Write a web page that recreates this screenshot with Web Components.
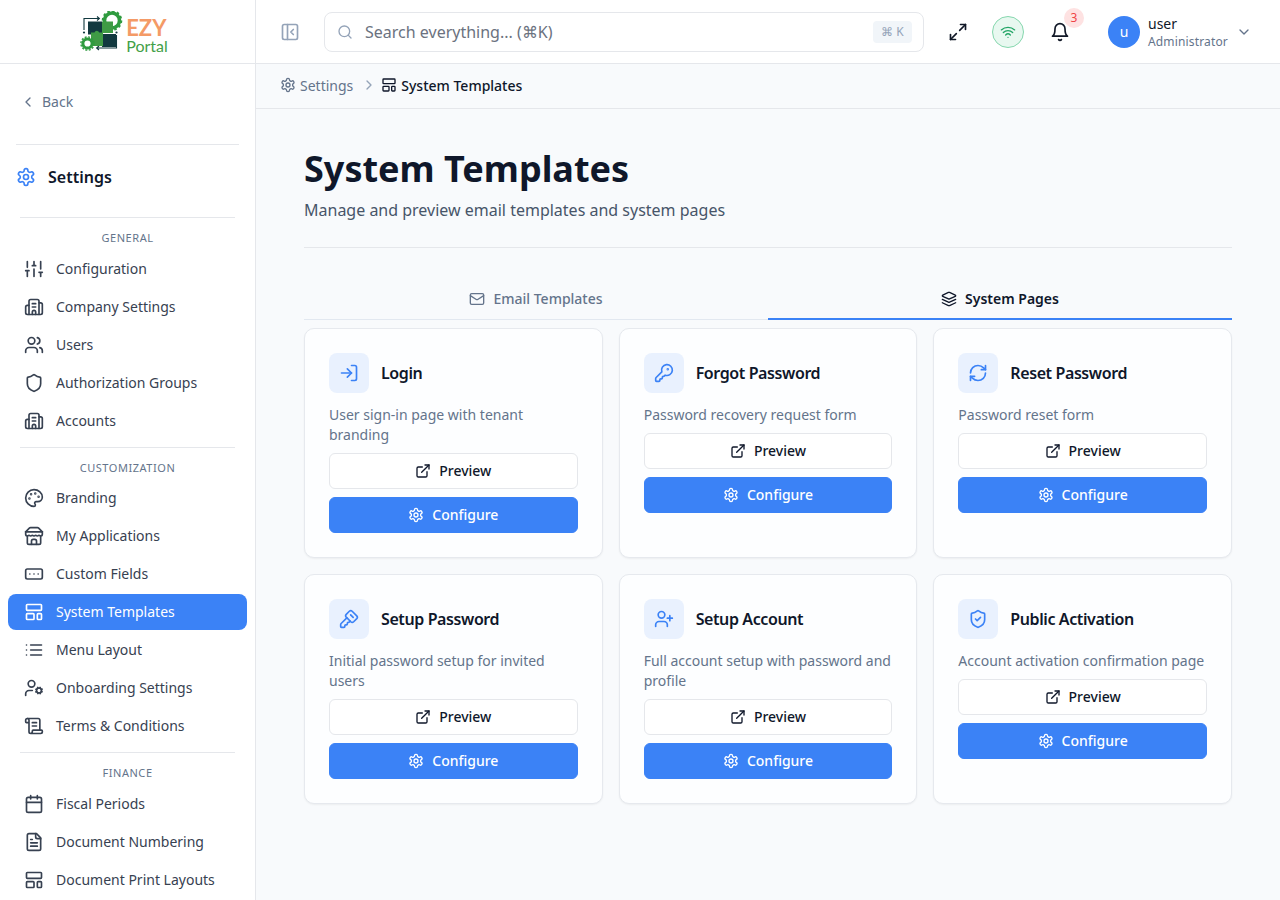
<!DOCTYPE html>
<html lang="en">
<head>
<meta charset="utf-8">
<title>System Templates</title>
<style>
  html, body { margin: 0; height: 100%; overflow: hidden; }
  body { font-family: "Noto Sans", sans-serif; color: #0f172a; }
</style>
</head>
<body>
<ez-app>
  <ez-sidebar slot="sidebar">
    <ez-nav-section label="General" label-height="33">
      <ez-nav-item icon="sliders">Configuration</ez-nav-item>
      <ez-nav-item icon="building">Company Settings</ez-nav-item>
      <ez-nav-item icon="users">Users</ez-nav-item>
      <ez-nav-item icon="shield">Authorization Groups</ez-nav-item>
      <ez-nav-item icon="building">Accounts</ez-nav-item>
    </ez-nav-section>
    <ez-nav-section label="Customization" label-height="32">
      <ez-nav-item icon="palette">Branding</ez-nav-item>
      <ez-nav-item icon="store">My Applications</ez-nav-item>
      <ez-nav-item icon="ellipsis">Custom Fields</ez-nav-item>
      <ez-nav-item icon="template" active>System Templates</ez-nav-item>
      <ez-nav-item icon="list">Menu Layout</ez-nav-item>
      <ez-nav-item icon="user-cog">Onboarding Settings</ez-nav-item>
      <ez-nav-item icon="scroll">Terms &amp; Conditions</ez-nav-item>
    </ez-nav-section>
    <ez-nav-section label="Finance" label-height="33" last>
      <ez-nav-item icon="calendar">Fiscal Periods</ez-nav-item>
      <ez-nav-item icon="file">Document Numbering</ez-nav-item>
      <ez-nav-item icon="template">Document Print Layouts</ez-nav-item>
    </ez-nav-section>
  </ez-sidebar>
  <ez-topbar slot="topbar"></ez-topbar>
  <ez-breadcrumb slot="crumbs"></ez-breadcrumb>
  <ez-page-head heading="System Templates">Manage and preview email templates and system pages</ez-page-head>
  <ez-tabs></ez-tabs>
  <ez-card-grid>
    <ez-template-card icon="log-in" heading="Login">User sign-in page with tenant branding</ez-template-card>
    <ez-template-card icon="key-round" heading="Forgot Password">Password recovery request form</ez-template-card>
    <ez-template-card icon="refresh" heading="Reset Password">Password reset form</ez-template-card>
    <ez-template-card icon="key-square" heading="Setup Password">Initial password setup for invited users</ez-template-card>
    <ez-template-card icon="user-plus" heading="Setup Account">Full account setup with password and profile</ez-template-card>
    <ez-template-card icon="shield-check" heading="Public Activation">Account activation confirmation page</ez-template-card>
  </ez-card-grid>
</ez-app>

<script>
  // lucide style icon bodies, 24x24 viewbox
  const GEAR = '<path d="M12.22 2h-.44a2 2 0 0 0-2 2v.18a2 2 0 0 1-1 1.73l-.43.25a2 2 0 0 1-2 0l-.15-.08a2 2 0 0 0-2.73.73l-.22.38a2 2 0 0 0 .73 2.73l.15.1a2 2 0 0 1 1 1.72v.51a2 2 0 0 1-1 1.74l-.15.09a2 2 0 0 0-.73 2.73l.22.38a2 2 0 0 0 2.73.73l.15-.08a2 2 0 0 1 2 0l.43.25a2 2 0 0 1 1 1.73V20a2 2 0 0 0 2 2h.44a2 2 0 0 0 2-2v-.18a2 2 0 0 1 1-1.73l.43-.25a2 2 0 0 1 2 0l.15.08a2 2 0 0 0 2.73-.73l.22-.39a2 2 0 0 0-.73-2.73l-.15-.08a2 2 0 0 1-1-1.74v-.5a2 2 0 0 1 1-1.74l.15-.09a2 2 0 0 0 .73-2.73l-.22-.38a2 2 0 0 0-2.73-.73l-.15.08a2 2 0 0 1-2 0l-.43-.25a2 2 0 0 1-1-1.73V4a2 2 0 0 0-2-2z"/><circle cx="12" cy="12" r="3"/>';
  const ICONS = {
    gear: GEAR,
    sliders: '<path d="M4 21v-7M4 10V3M12 21v-9M12 8V3M20 21v-5M20 12V3M2 14h4M10 8h4M18 16h4"/>',
    building: '<path d="M10 12h4"/><path d="M10 8h4"/><path d="M14 21v-3a2 2 0 0 0-4 0v3"/><path d="M6 10H4a2 2 0 0 0-2 2v7a2 2 0 0 0 2 2h16a2 2 0 0 0 2-2V9a2 2 0 0 0-2-2h-2"/><path d="M6 21V5a2 2 0 0 1 2-2h8a2 2 0 0 1 2 2v16"/>',
    users: '<path d="M16 21v-2a4 4 0 0 0-4-4H6a4 4 0 0 0-4 4v2"/><circle cx="9" cy="7" r="4"/><path d="M22 21v-2a4 4 0 0 0-3-3.87"/><path d="M16 3.13a4 4 0 0 1 0 7.75"/>',
    shield: '<path d="M20 13c0 5-3.5 7.5-7.66 8.95a1 1 0 0 1-.67-.01C7.5 20.5 4 18 4 13V6a1 1 0 0 1 1-1c2 0 4.5-1.2 6.24-2.72a1.17 1.17 0 0 1 1.52 0C14.51 3.81 17 5 19 5a1 1 0 0 1 1 1z"/>',
    'shield-check': '<path d="M20 13c0 5-3.5 7.5-7.66 8.95a1 1 0 0 1-.67-.01C7.5 20.5 4 18 4 13V6a1 1 0 0 1 1-1c2 0 4.5-1.2 6.24-2.72a1.17 1.17 0 0 1 1.52 0C14.51 3.81 17 5 19 5a1 1 0 0 1 1 1z"/><path d="m9 12 2 2 4-4"/>',
    palette: '<circle cx="13.5" cy="6.5" r=".5" fill="currentColor"/><circle cx="17.5" cy="10.5" r=".5" fill="currentColor"/><circle cx="8.5" cy="7.5" r=".5" fill="currentColor"/><circle cx="6.5" cy="12.5" r=".5" fill="currentColor"/><path d="M12 2C6.5 2 2 6.5 2 12s4.5 10 10 10c.926 0 1.648-.746 1.648-1.688 0-.437-.18-.835-.437-1.125-.29-.289-.438-.652-.438-1.125a1.64 1.64 0 0 1 1.668-1.668h1.996c3.051 0 5.555-2.503 5.555-5.554C21.965 6.012 17.461 2 12 2z"/>',
    store: '<path d="m2 7 4.41-4.41A2 2 0 0 1 7.83 2h8.34a2 2 0 0 1 1.42.59L22 7"/><path d="M4 12v8a2 2 0 0 0 2 2h12a2 2 0 0 0 2-2v-8"/><path d="M15 22v-4a2 2 0 0 0-2-2h-2a2 2 0 0 0-2 2v4"/><path d="M2 7h20"/><path d="M22 7v3a2 2 0 0 1-2 2a2.7 2.7 0 0 1-1.59-.63.7.7 0 0 0-.82 0A2.7 2.7 0 0 1 16 12a2.7 2.7 0 0 1-1.59-.63.7.7 0 0 0-.82 0A2.7 2.7 0 0 1 12 12a2.7 2.7 0 0 1-1.59-.63.7.7 0 0 0-.82 0A2.7 2.7 0 0 1 8 12a2.7 2.7 0 0 1-1.59-.63.7.7 0 0 0-.82 0A2.7 2.7 0 0 1 4 12a2 2 0 0 1-2-2V7"/>',
    ellipsis: '<rect width="20" height="12" x="2" y="6" rx="2"/><path d="M12 12h.01M17 12h.01M7 12h.01"/>',
    template: '<rect width="18" height="7" x="3" y="3" rx="1"/><rect width="9" height="7" x="3" y="14" rx="1"/><rect width="5" height="7" x="16" y="14" rx="1"/>',
    list: '<path d="M3 12h.01M3 18h.01M3 6h.01M8 12h13M8 18h13M8 6h13"/>',
    'user-cog': '<circle cx="18" cy="15" r="3"/><circle cx="9" cy="7" r="4"/><path d="M10 15H6a4 4 0 0 0-4 4v2"/><path d="m21.7 16.4-.9-.3M15.2 13.9l-.9-.3M16.6 18.7l.3-.9M19.1 12.2l.3-.9M19.6 18.7l-.4-1M16.8 12.3l-.4-1M14.3 16.6l1-.4M20.7 13.8l1-.4"/>',
    scroll: '<path d="M15 12h-5M15 8h-5"/><path d="M19 17V5a2 2 0 0 0-2-2H4"/><path d="M8 21h12a2 2 0 0 0 2-2v-1a1 1 0 0 0-1-1H11a1 1 0 0 0-1 1v1a2 2 0 1 1-4 0V5a2 2 0 1 0-4 0v2a1 1 0 0 0 1 1h3"/>',
    calendar: '<path d="M8 2v4M16 2v4"/><rect width="18" height="18" x="3" y="4" rx="2"/><path d="M3 10h18"/>',
    file: '<path d="M15 2H6a2 2 0 0 0-2 2v16a2 2 0 0 0 2 2h12a2 2 0 0 0 2-2V7Z"/><path d="M14 2v4a2 2 0 0 0 2 2h4"/><path d="M10 9H8M16 13H8M16 17H8"/>',
    panel: '<rect width="18" height="18" x="3" y="3" rx="2"/><path d="M9 3v18"/><path d="m16 15-3-3 3-3"/>',
    search: '<circle cx="11" cy="11" r="8"/><path d="m21 21-4.3-4.3"/>',
    expand: '<path d="M15 3h6v6"/><path d="m21 3-7 7"/><path d="m3 21 7-7"/><path d="M9 21H3v-6"/>',
    wifi: '<path d="M12 20h.01"/><path d="M2 8.82a15 15 0 0 1 20 0"/><path d="M5 12.859a10 10 0 0 1 14 0"/><path d="M8.5 16.429a5 5 0 0 1 7 0"/>',
    bell: '<path d="M6 8a6 6 0 0 1 12 0c0 7 3 9 3 9H3s3-2 3-9"/><path d="M10.3 21a1.94 1.94 0 0 0 3.4 0"/>',
    'chevron-down': '<path d="m6 9 6 6 6-6"/>',
    'chevron-left': '<path d="m15 18-6-6 6-6"/>',
    'chevron-right': '<path d="m9 18 6-6-6-6"/>',
    mail: '<rect width="20" height="16" x="2" y="4" rx="2"/><path d="m22 7-8.97 5.7a1.94 1.94 0 0 1-2.06 0L2 7"/>',
    layers: '<path d="M12.83 2.18a2 2 0 0 0-1.66 0L2.6 6.08a1 1 0 0 0 0 1.83l8.58 3.91a2 2 0 0 0 1.66 0l8.58-3.9a1 1 0 0 0 0-1.83Z"/><path d="m22 17.65-9.17 4.16a2 2 0 0 1-1.66 0L2 17.65"/><path d="m22 12.65-9.17 4.16a2 2 0 0 1-1.66 0L2 12.65"/>',
    'log-in': '<path d="M15 3h4a2 2 0 0 1 2 2v14a2 2 0 0 1-2 2h-4"/><path d="m10 17 5-5-5-5"/><path d="M15 12H3"/>',
    'key-round': '<path d="M2.586 17.414A2 2 0 0 0 2 18.828V21a1 1 0 0 0 1 1h3a1 1 0 0 0 1-1v-1a1 1 0 0 1 1-1h1a1 1 0 0 0 1-1v-1a1 1 0 0 1 1-1h.172a2 2 0 0 0 1.414-.586l.814-.814a6.5 6.5 0 1 0-4-4z"/><circle cx="16.5" cy="7.5" r=".5" fill="currentColor"/>',
    'key-square': '<path d="M12.4 2.7a2.5 2.5 0 0 1 3.4 0l5.5 5.5a2.5 2.5 0 0 1 0 3.4l-3.7 3.7a2.5 2.5 0 0 1-3.4 0L8.7 9.8a2.5 2.5 0 0 1 0-3.4z"/><path d="m14 7 3 3"/><path d="m9.4 10.6-6.814 6.814A2 2 0 0 0 2 18.828V21a1 1 0 0 0 1 1h3a1 1 0 0 0 1-1v-1a1 1 0 0 1 1-1h1a1 1 0 0 0 1-1v-1a1 1 0 0 1 1-1h.172a2 2 0 0 0 1.414-.586l.814-.814"/>',
    refresh: '<path d="M3 12a9 9 0 0 1 9-9 9.75 9.75 0 0 1 6.74 2.74L21 8"/><path d="M21 3v5h-5"/><path d="M21 12a9 9 0 0 1-9 9 9.75 9.75 0 0 1-6.74-2.74L3 16"/><path d="M8 16H3v5"/>',
    external: '<path d="M15 3h6v6"/><path d="M10 14 21 3"/><path d="M18 13v6a2 2 0 0 1-2 2H5a2 2 0 0 1-2-2V8a2 2 0 0 1 2-2h6"/>',
    'user-plus': '<path d="M16 21v-2a4 4 0 0 0-4-4H6a4 4 0 0 0-4 4v2"/><circle cx="9" cy="7" r="4"/><path d="M19 8v6M22 11h-6"/>'
  };

  // small helper, every element here just has a fixed shadow template
  class Base extends HTMLElement {
    connectedCallback() {
      if (this.shadowRoot) return;
      this.attachShadow({ mode: 'open' });
      this.shadowRoot.innerHTML = this.render();
    }
  }

  class EzIcon extends Base {
    render() {
      const size = this.getAttribute('size') || 20;
      return `<style>
        :host { display: inline-flex; flex: none; width: ${size}px; height: ${size}px; }
        svg { display: block; }
      </style>
      <svg width="${size}" height="${size}" viewBox="0 0 24 24" fill="none" stroke="currentColor" stroke-width="2" stroke-linecap="round" stroke-linejoin="round">${ICONS[this.getAttribute('name')] || ''}</svg>`;
    }
  }
  customElements.define('ez-icon', EzIcon);

  class EzLogo extends Base {
    render() {
      return `<style>
        :host { display: flex; align-items: center; height: 40px; }
        svg { display: block; flex: none; }
        .word { display: flex; flex-direction: column; margin-top: 8px; font-family: Lato, sans-serif; }
        .ezy { color: #f49a66; font-size: 22px; font-weight: 700; line-height: 20px; }
        .portal { color: #43a047; font-size: 16px; line-height: 15px; }
      </style>
      <svg width="46" height="42" viewBox="0 0 46 42">
        <g fill="none" stroke="#12393f" stroke-width="1.1">
          <path d="M4 19V7.500h15M17 5.500l2.400 2-2.400 2"/>
          <path d="M36.500 24v13H17M19 35l-2.400 2 2.400 2"/>
        </g>
        <rect x="8" y="10.500" width="14" height="13" fill="#12393f"/>
        <rect x="22" y="23" width="14" height="13" fill="#12393f"/>
        <path d="M11 21.500h3.500a2.400 2.400 0 0 1 4.600 0H23V35H11z" fill="#3f9b45"/>
        <circle cx="32" cy="9.500" r="7.500" fill="none" stroke="#2f9b3f" stroke-width="3.600"/>
        <circle cx="32" cy="9.500" r="9.400" fill="none" stroke="#2f9b3f" stroke-width="1.800" stroke-dasharray="2.600 2.300"/>
        <path d="M22 10.500h11V22H22z" fill="#3f9b45"/>
        <circle cx="7.500" cy="32.500" r="4.600" fill="#fff" stroke="#2f9b3f" stroke-width="3"/>
        <circle cx="7.500" cy="32.500" r="6.600" fill="none" stroke="#2f9b3f" stroke-width="1.400" stroke-dasharray="2 1.500"/>
        <circle cx="4" cy="21.500" r="1.100" fill="#12393f"/>
        <circle cx="36.500" cy="21.500" r="1.100" fill="#12393f"/>
      </svg>
      <div class="word"><span class="ezy">EZY</span><span class="portal">Portal</span></div>`;
    }
  }
  customElements.define('ez-logo', EzLogo);

  class EzNavItem extends Base {
    render() {
      const active = this.hasAttribute('active');
      return `<style>
        :host { display: block; }
        a {
          display: flex; align-items: center; gap: 12px; height: 36px; padding: 0 16px;
          border-radius: 8px; font-size: 14px; line-height: 20px; cursor: pointer;
          color: ${active ? '#fff' : '#374151'}; background: ${active ? '#3b82f6' : 'transparent'};
        }
      </style>
      <a><ez-icon name="${this.getAttribute('icon')}"></ez-icon><slot></slot></a>`;
    }
  }
  customElements.define('ez-nav-item', EzNavItem);

  class EzNavSection extends Base {
    render() {
      return `<style>
        :host { display: block; }
        .label {
          height: ${this.getAttribute('label-height')}px; box-sizing: border-box; padding-top: 12px; text-align: center;
          font-size: 11px; line-height: 15px; letter-spacing: .55px; text-transform: uppercase; color: #64748b;
        }
        .items { display: flex; flex-direction: column; gap: 2px; padding: 0 8px; }
        .rule { height: 1px; margin: 8px 20px 0; background: #e5e7eb; }
      </style>
      <div class="label">${this.getAttribute('label')}</div>
      <div class="items"><slot></slot></div>
      ${this.hasAttribute('last') ? '' : '<div class="rule"></div>'}`;
    }
  }
  customElements.define('ez-nav-section', EzNavSection);

  class EzSidebar extends Base {
    render() {
      return `<style>
        :host { display: flex; flex-direction: column; width: 256px; height: 100%; box-sizing: border-box;
          background: #fff; border-right: 1px solid #e5e7eb; overflow: hidden; flex: none; }
        .logo { height: 64px; flex: none; box-sizing: border-box; border-bottom: 1px solid #e5e7eb; display: flex; justify-content: center; align-items: center; padding-right: 7px; }
        .back { height: 80px; flex: none; box-sizing: border-box; padding: 0 0 4px 20px; display: flex; align-items: center; gap: 6px; font-size: 14px; line-height: 20px; color: #64748b; }
        .head { margin: 0 16px; height: 73px; flex: none; box-sizing: border-box; border-top: 1px solid #e5e7eb; padding-bottom: 8px; display: flex; align-items: center; gap: 12px; font-size: 16px; font-weight: 600; color: #0f172a; }
        .head ez-icon { color: #3b82f6; }
        .rule { height: 1px; margin: 0 20px; background: #e5e7eb; flex: none; }
      </style>
      <div class="logo"><ez-logo></ez-logo></div>
      <div class="back"><ez-icon name="chevron-left" size="16"></ez-icon>Back</div>
      <div class="head"><ez-icon name="gear"></ez-icon>Settings</div>
      <div class="rule"></div>
      <slot></slot>`;
    }
  }
  customElements.define('ez-sidebar', EzSidebar);

  class EzTopbar extends Base {
    render() {
      return `<style>
        :host { display: flex; align-items: center; height: 64px; box-sizing: border-box; flex: none;
          background: #fff; border-bottom: 1px solid #e5e7eb; padding: 0 28px 0 24px; }
        .toggle { color: #94a3b8; width: 20px; height: 20px; margin-right: 24px; flex: none; }
        .search { width: 600px; height: 40px; box-sizing: border-box; flex: none; display: flex; align-items: center; gap: 12px;
          border: 1px solid #e5e7eb; border-radius: 8px; padding: 0 11px 0 12px; background: #fff; }
        .search ez-icon { color: #94a3b8; }
        .search span { flex: 1; font-size: 16px; color: #6b7280; }
        kbd { font: 12px "Noto Sans", sans-serif; color: #94a3b8; background: #f1f5f9; border-radius: 4px; height: 22px; width: 39px; display: flex; align-items: center; justify-content: center; }
        .expand { color: #111827; margin-left: 24px; }
        .wifi { width: 32px; height: 32px; flex: none; box-sizing: border-box; border-radius: 50%; margin-left: 24px; background: #e8f8f0; border: 1px solid #86d7ae; color: #22a566; display: flex; align-items: center; justify-content: center; }
        .bell { position: relative; margin-left: 26px; width: 20px; height: 20px; flex: none; color: #111827; }
        .badge { position: absolute; left: 14px; top: -14px; width: 20px; height: 20px; border-radius: 50%; background: #fee2e2; color: #ef4444; font-size: 12px; line-height: 20px; text-align: center; }
        .avatar { margin-left: 38px; width: 32px; height: 32px; border-radius: 50%; background: #3b82f6; color: #fff; font-size: 14px; display: flex; align-items: center; justify-content: center; flex: none; }
        .who { margin-left: 8px; padding-top: 2px; display: flex; flex-direction: column; width: 88px; flex: none; }
        .who b { font-weight: 400; font-size: 14px; line-height: 18px; color: #0f172a; }
        .who small { font-size: 12px; line-height: 18px; letter-spacing: .15px; color: #64748b; }
        .caret { color: #64748b; }
      </style>
      <div class="toggle"><ez-icon name="panel"></ez-icon></div>
      <div class="search"><ez-icon name="search" size="16"></ez-icon><span>Search everything... (⌘K)</span><kbd>⌘ K</kbd></div>
      <ez-icon class="expand" name="expand"></ez-icon>
      <div class="wifi"><ez-icon name="wifi" size="16"></ez-icon></div>
      <div class="bell"><ez-icon name="bell"></ez-icon><span class="badge">3</span></div>
      <div class="avatar">u</div>
      <div class="who"><b>user</b><small>Administrator</small></div>
      <ez-icon class="caret" name="chevron-down" size="16"></ez-icon>`;
    }
  }
  customElements.define('ez-topbar', EzTopbar);

  class EzBreadcrumb extends Base {
    render() {
      return `<style>
        :host { display: flex; align-items: center; height: 45px; box-sizing: border-box; flex: none;
          background: #f8fafc; border-bottom: 1px solid #e5e7eb; padding: 0 24px 2px; font-size: 14px; color: #64748b; }
        span { display: flex; align-items: center; gap: 4px; }
        .sep { margin: 0 4px 0 8px; color: #94a3b8; }
        .cur { color: #0f172a; font-weight: 500; }
      </style>
      <span><ez-icon name="gear" size="16"></ez-icon>Settings</span>
      <ez-icon class="sep" name="chevron-right" size="16"></ez-icon>
      <span class="cur"><ez-icon name="template" size="16"></ez-icon>System Templates</span>`;
    }
  }
  customElements.define('ez-breadcrumb', EzBreadcrumb);

  class EzPageHead extends Base {
    render() {
      return `<style>
        :host { display: block; padding-bottom: 25px; margin-bottom: 31px; border-bottom: 1px solid #e5e7eb; }
        h1 { margin: 0; font-size: 36px; line-height: 40px; font-weight: 700; letter-spacing: 0; color: #0f172a; }
        p { margin: 9px 0 0; font-size: 16px; line-height: 24px; color: #475569; }
      </style>
      <h1>${this.getAttribute('heading')}</h1>
      <p><slot></slot></p>`;
    }
  }
  customElements.define('ez-page-head', EzPageHead);

  class EzTabs extends Base {
    render() {
      return `<style>
        :host { display: grid; grid-template-columns: 1fr 1fr; height: 41px; box-sizing: border-box; margin-bottom: 8px; border-bottom: 1px solid #e2e8f0; font-size: 14px; }
        div { display: flex; align-items: center; justify-content: center; gap: 8px; padding-bottom: 2px; height: 41px; box-sizing: border-box; font-weight: 500; color: #64748b; }
        .on { color: #0f172a; font-weight: 600; padding-bottom: 0; border-bottom: 2px solid #3b82f6; }
      </style>
      <div><ez-icon name="mail" size="16"></ez-icon>Email Templates</div>
      <div class="on"><ez-icon name="layers" size="16"></ez-icon>System Pages</div>`;
    }
  }
  customElements.define('ez-tabs', EzTabs);

  class EzCardGrid extends Base {
    render() {
      return `<style>
        :host { display: grid; grid-template-columns: repeat(3, 1fr); gap: 16px; }
      </style><slot></slot>`;
    }
  }
  customElements.define('ez-card-grid', EzCardGrid);

  class EzButton extends Base {
    render() {
      const primary = this.hasAttribute('primary');
      return `<style>
        :host { display: block; }
        button {
          width: 100%; height: 36px; box-sizing: border-box; display: flex; align-items: center; justify-content: center; gap: 8px;
          font: 500 14px/20px "Noto Sans", sans-serif; border-radius: 6px; cursor: pointer;
          border: 1px solid ${primary ? '#3b82f6' : '#e5e7eb'};
          background: ${primary ? '#3b82f6' : '#fff'}; color: ${primary ? '#fff' : '#0f172a'};
        }
      </style>
      <button><ez-icon name="${this.getAttribute('icon')}" size="16"></ez-icon><slot></slot></button>`;
    }
  }
  customElements.define('ez-button', EzButton);

  class EzTemplateCard extends Base {
    render() {
      return `<style>
        :host { display: block; min-width: 0; box-sizing: border-box; padding: 24px; background: #fdfeff; border: 1px solid #e6e9ee; border-radius: 10px; box-shadow: 0 1px 2px rgba(0,0,0,.05); }
        .top { display: flex; align-items: center; gap: 12px; margin-bottom: 12px; }
        .tile { width: 40px; height: 40px; border-radius: 8px; background: #e9f1fe; color: #3b82f6; display: flex; align-items: center; justify-content: center; flex: none; }
        h3 { margin: 0; font-size: 16px; line-height: 24px; font-weight: 600; letter-spacing: -.4px; color: #0f172a; }
        p { margin: 0 0 8px; font-size: 14px; line-height: 20px; color: #64748b; }
        ez-button + ez-button { margin-top: 8px; }
      </style>
      <div class="top"><div class="tile"><ez-icon name="${this.getAttribute('icon')}"></ez-icon></div><h3>${this.getAttribute('heading')}</h3></div>
      <p><slot></slot></p>
      <ez-button icon="external">Preview</ez-button>
      <ez-button icon="gear" primary>Configure</ez-button>`;
    }
  }
  customElements.define('ez-template-card', EzTemplateCard);

  class EzApp extends Base {
    render() {
      return `<style>
        :host { display: flex; height: 900px; width: 1280px; overflow: hidden; background: #f8fafc; }
        .right { flex: 1; min-width: 0; display: flex; flex-direction: column; }
        main { flex: 1; padding: 40px 48px 0; overflow: hidden; }
      </style>
      <slot name="sidebar"></slot>
      <div class="right">
        <slot name="topbar"></slot>
        <slot name="crumbs"></slot>
        <main><slot></slot></main>
      </div>`;
    }
  }
  customElements.define('ez-app', EzApp);
</script>
</body>
</html>
